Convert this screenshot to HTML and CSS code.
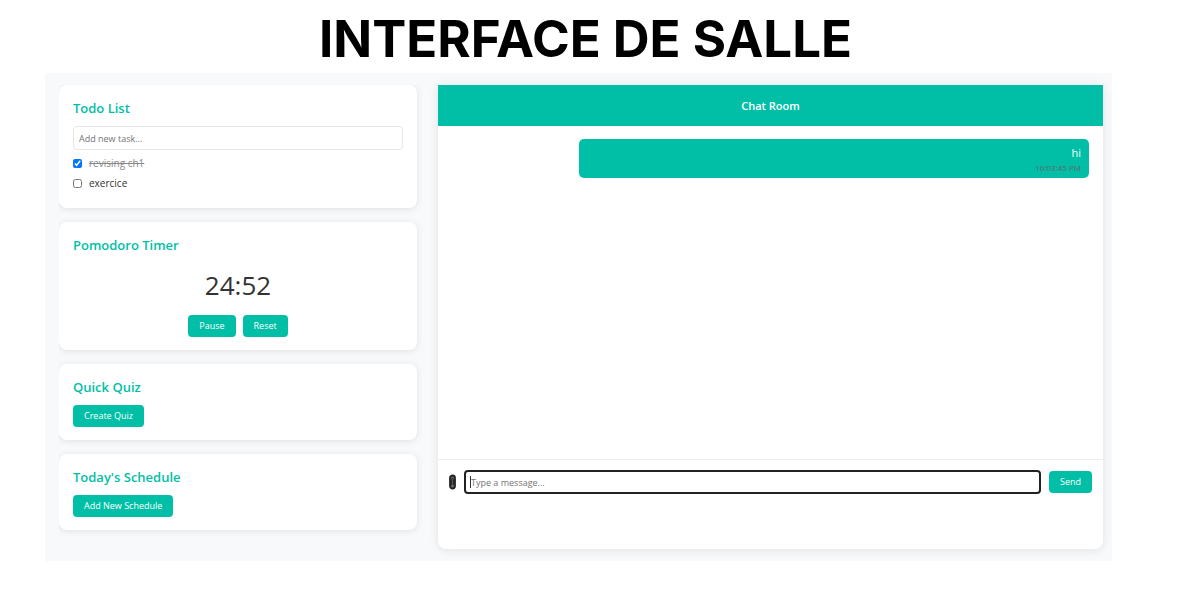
FILE: index.html
```html
<!DOCTYPE html>
<html lang="en">
<head>
<meta charset="utf-8">
<meta name="viewport" content="width=device-width, initial-scale=1">
<title>Interface de salle</title>
<link rel="stylesheet" href="styles.css">
</head>
<body>
<h1 class="page-title">INTERFACE DE SALLE</h1>
<main class="room">
  <div class="sidebar">
    <section class="card todo">
      <h2 class="card-title">Todo List</h2>
      <input class="field" type="text" placeholder="Add new task..." aria-label="Add new task">
      <ul class="tasks">
        <li><label class="task"><input type="checkbox" class="check" checked><span class="done">revising ch1</span></label></li>
        <li><label class="task"><input type="checkbox" class="check"><span>exercice</span></label></li>
      </ul>
    </section>
    <section class="card">
      <h2 class="card-title">Pomodoro Timer</h2>
      <div class="time">24:52</div>
      <div class="timer-actions">
        <button class="btn" type="button">Pause</button>
        <button class="btn" type="button">Reset</button>
      </div>
    </section>
    <section class="card">
      <h2 class="card-title">Quick Quiz</h2>
      <button class="btn" type="button">Create Quiz</button>
    </section>
    <section class="card">
      <h2 class="card-title">Today's Schedule</h2>
      <button class="btn" type="button">Add New Schedule</button>
    </section>
  </div>
  <section class="chat">
    <h2 class="chat-header">Chat Room</h2>
    <div class="messages">
      <div class="message">
        <div class="message-text">hi</div>
        <time class="message-time">10:03:45 PM</time>
      </div>
    </div>
    <form class="composer">
      <button class="attach" type="button" aria-label="Attach a file">
        <svg width="7" height="16" viewBox="0 0 7 16" fill="none">
          <rect x="1" y="1.500" width="5" height="13" rx="2.500" fill="#666" stroke="#222" stroke-width="1.800"/>
          <path d="M2.600 11V5.500a.9.9 0 0 1 1.800 0V11" stroke="#222" stroke-width="1"/>
        </svg>
      </button>
      <div class="message-box">
        <input class="field message-field" type="text" placeholder="Type a message..." aria-label="Type a message">
        <span class="caret"></span>
      </div>
      <button class="btn" type="button">Send</button>
    </form>
  </section>
</main>
</body>
</html>
```
FILE: styles.css
```css
* { box-sizing: border-box; }
body {
  margin: 0;
  background: #fff;
  color: #333;
  font-family: "Segoe UI", "Open Sans", "Noto Sans", sans-serif;
  font-size: 11px;
  line-height: 16px;
}
h1, h2, ul { margin: 0; padding: 0; }
.page-title {
  padding: 7px 6px 1px 0;
  color: #000;
  font: 700 51px/64px Inter, "Liberation Sans", sans-serif;
  text-align: center;
}
.room {
  display: grid;
  grid-template-columns: 366fr 665fr;
  gap: 13px;
  min-height: 488px;
  margin: 1px 65px 43px 45px;
  padding: 12px 9px 12px 14px;
  background: #f8f9fb;
}
.sidebar {
  display: flex;
  flex-direction: column;
  gap: 14px;
  padding-right: 8px;
  overflow: hidden;
}
.card {
  padding: 13px 14px;
  background: #fff;
  border-radius: 8px;
  box-shadow: 0 1px 7px rgba(0, 0, 0, 0.1);
}
.todo { padding-bottom: 15px; }
.card-title {
  margin-bottom: 8px;
  color: #00bfa6;
  font-size: 13px;
  font-weight: 600;
  line-height: 20px;
}
.field {
  display: block;
  width: 100%;
  height: 24px;
  padding: 0 5px;
  border: 1px solid #e6e6e6;
  border-radius: 4px;
  background: #fff;
  color: #333;
  font: inherit;
  font-size: 9px;
}
.field::placeholder { color: #757575; opacity: 1; }
.tasks { padding-top: 3px; list-style: none; }
.task {
  display: flex;
  align-items: center;
  gap: 7px;
  height: 20px;
  font-size: 10px;
}
.check { width: 9px; height: 9px; margin: 0; }
.done { color: #888; text-decoration: line-through; }
.time {
  padding: 4px 0;
  font-size: 26px;
  line-height: 36px;
  text-align: center;
}
.timer-actions {
  display: flex;
  justify-content: center;
  gap: 7px;
  padding-top: 8px;
}
.btn {
  height: 22px;
  padding: 0 11px;
  border: 0;
  border-radius: 4px;
  background: #00bfa6;
  color: #fff;
  font: inherit;
  font-size: 9px;
}
.chat {
  display: flex;
  flex-direction: column;
  background: #fff;
  border-radius: 0 0 8px 8px;
  box-shadow: 0 1px 10px rgba(0, 0, 0, 0.1);
}
.chat-header {
  padding: 13px;
  background: #00bfa6;
  color: #fff;
  font-size: 11px;
  font-weight: 600;
  line-height: 15px;
  text-align: center;
}
.messages { flex: 1; padding: 13px 14px; }
.message {
  width: 80%;
  margin-left: auto;
  padding: 6px 8px 3px;
  border-radius: 5px;
  background: #00bfa6;
  color: #fff;
  text-align: right;
}
.message-time {
  display: block;
  color: #666;
  font-size: 8px;
  line-height: 14px;
}
.composer {
  min-height: 90px;
  padding: 10px 11px;
  border-top: 1px solid #eee;
  display: grid;
  grid-template-columns: auto 1fr auto;
  grid-template-rows: 24px;
  align-items: center;
  gap: 8px;
}
.attach {
  display: flex;
  align-items: center;
  height: 24px;
  padding: 0;
  border: 0;
  background: none;
}
.message-box { position: relative; }
.message-field { border: 2px solid #222; }
.caret {
  position: absolute;
  top: 6px;
  left: 6px;
  width: 1px;
  height: 12px;
  background: #333;
}
```
